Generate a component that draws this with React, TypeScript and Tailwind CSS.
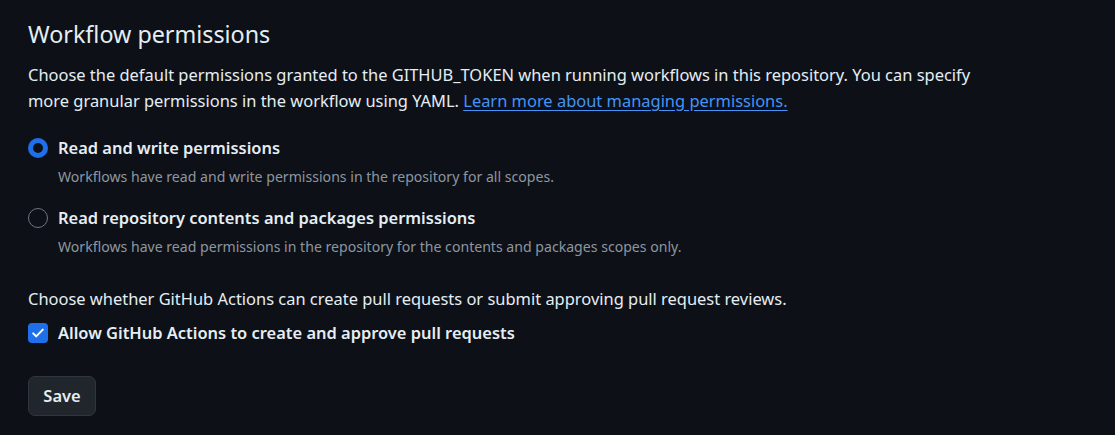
export default function App() {
  return (
    <div
      className="min-h-screen bg-[#0d1117] px-[28px] pt-[16px] text-[#e6edf3]"
      style={{ fontFamily: '"Segoe UI", "Noto Sans", "Open Sans", sans-serif' }}
    >
      <h2 className="text-[23.3px] leading-[36px] font-normal">Workflow permissions</h2>
      <p className="mt-[10px] max-w-[955px] text-[16.45px] leading-[26px]">
        Choose the default permissions granted to the GITHUB_TOKEN when running workflows in this repository. You can
        specify more granular permissions in the workflow using YAML.{' '}
        <a href="#" className="text-[#4493f8] underline underline-offset-[3px]">
          Learn more about managing permissions.
        </a>
      </p>

      {/* Permission radios */}
      <div className="mt-[21px] flex flex-col gap-[17px]">
        <label className="flex gap-[10px]">
          <span className="mt-[3px] h-[20px] w-[20px] shrink-0 rounded-full border-[5px] border-[#1f6feb] bg-[#0d1117]" />
          <span className="flex flex-col">
            <span className="text-[16.45px] font-semibold leading-[26px]">Read and write permissions</span>
            <span className="mt-1 text-[14.1px] leading-[23px] text-[#8d96a0]">
              Workflows have read and write permissions in the repository for all scopes.
            </span>
          </span>
        </label>
        <label className="flex gap-[10px]">
          <span className="mt-[3px] h-[20px] w-[20px] shrink-0 rounded-full border border-[#6e7681] bg-[#0d1117]" />
          <span className="flex flex-col">
            <span className="text-[16.45px] font-semibold leading-[26px]">Read repository contents and packages permissions</span>
            <span className="mt-1 text-[14.1px] leading-[23px] text-[#8d96a0]">
              Workflows have read permissions in the repository for the contents and packages scopes only.
            </span>
          </span>
        </label>
      </div>

      <p className="mt-[28px] text-[16.45px] leading-[26px]">
        Choose whether GitHub Actions can create pull requests or submit approving pull request reviews.
      </p>
      <label className="mt-[8px] flex items-center gap-[10px]">
        <span className="flex h-[20px] w-[20px] items-center justify-center rounded-[4px] bg-[#1f6feb]">
          <svg viewBox="0 0 16 16" className="h-[16px] w-[16px]" fill="none" stroke="white" strokeWidth="2">
            <path d="M3.2 8.4l3 3 6.6-6.8" strokeLinecap="round" strokeLinejoin="round" />
          </svg>
        </span>
        <span className="text-[16.45px] font-semibold leading-[26px]">Allow GitHub Actions to create and approve pull requests</span>
      </label>

      <button className="mt-[30px] h-[40px] w-[68px] rounded-[7px] border border-[#30363d] bg-[#21262d] text-[16.45px] font-semibold text-[#e6edf3]">
        Save
      </button>
    </div>
  )
}
